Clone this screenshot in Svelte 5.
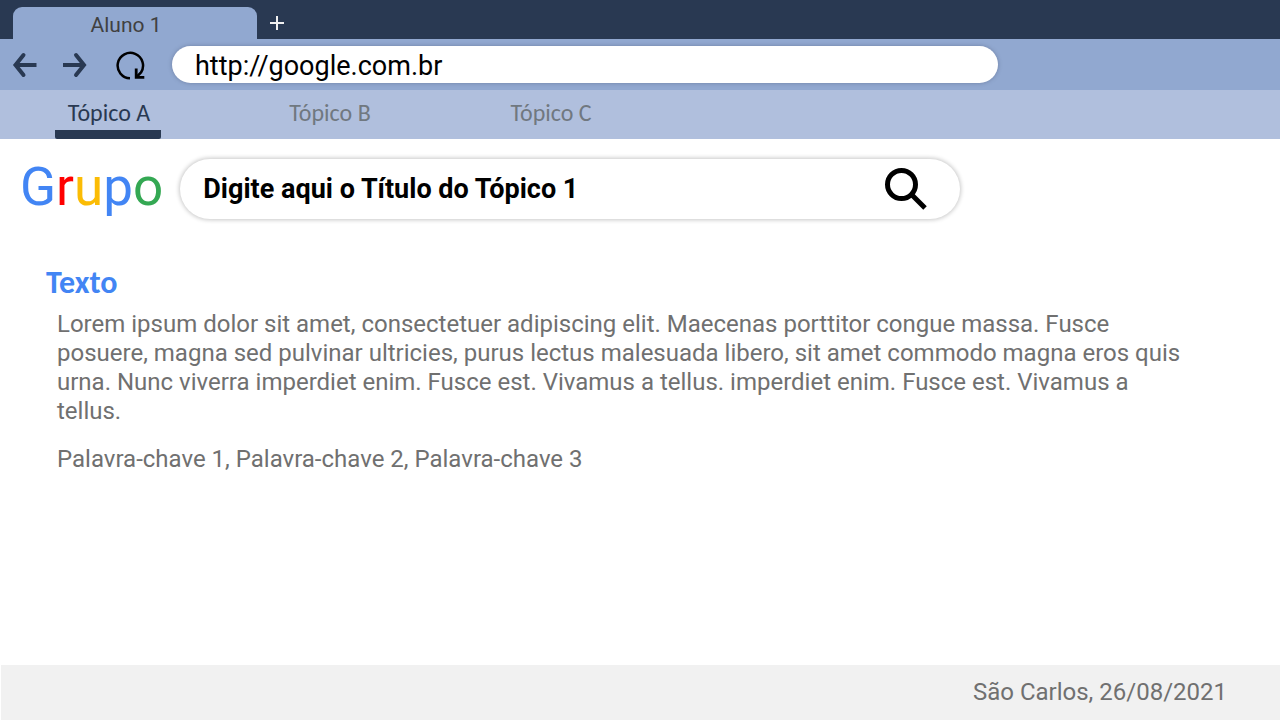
<script lang="ts">
  // Browser-style slide: window tab, address bar, topic navigation and content.
  const topics = ['Tópico A', 'Tópico B', 'Tópico C'];

  const logo = [
    { letter: 'G', color: 'blue' },
    { letter: 'r', color: 'red' },
    { letter: 'u', color: 'yellow' },
    { letter: 'p', color: 'blue' },
    { letter: 'o', color: 'green' }
  ];

  let active = $state(0);
  let url = $state('http://google.com.br');
  let title = $state('Digite aqui o Título do Tópico 1');
</script>

<div class="window">
  <header>
    <div class="tabs">
      <button class="tab">Aluno 1</button>
      <button class="new-tab" aria-label="Nova aba">
        <svg width="14" height="14" viewBox="0 0 14 14">
          <path d="M7 0v14M0 7h14" />
        </svg>
      </button>
    </div>

    <div class="toolbar">
      <button class="tool" aria-label="Voltar">
        <svg class="arrow" width="26" height="26" viewBox="0 0 26 26">
          <path d="M11.5 3L3.5 13l8 10" stroke-linecap="round" />
          <path d="M3 13h21.5" />
        </svg>
      </button>
      <button class="tool" aria-label="Avançar">
        <svg class="arrow" width="26" height="26" viewBox="0 0 26 26">
          <path d="M14 3l8 10l-8 10" stroke-linecap="round" />
          <path d="M22.5 13H1" />
        </svg>
      </button>
      <button class="tool reload" aria-label="Recarregar">
        <svg width="30" height="30" viewBox="0 0 30 30">
          <path d="M14 28.3A12.7 12.7 0 1 1 25 22.500L21 26.500" stroke-width="2.5" />
          <path d="M20.200 18.500V27.300H28.300" stroke-width="2.8" />
        </svg>
      </button>
      <input class="address" type="text" aria-label="Endereço" bind:value={url} />
    </div>

    <nav>
      {#each topics as topic, i}
        <a href="#topico-{i + 1}" class:active={active === i} onclick={() => (active = i)}>{topic}</a>
      {/each}
    </nav>
  </header>

  <main>
    <div class="search-row">
      <div class="logo">{#each logo as { letter, color }}<span class={color}>{letter}</span>{/each}</div>
      <div class="search">
        <input type="text" aria-label="Título" bind:value={title} />
        <button aria-label="Pesquisar">
          <svg width="44" height="44" viewBox="0 0 44 44">
            <circle cx="17.500" cy="17.500" r="14" />
            <path d="M27 27L41 41" />
          </svg>
        </button>
      </div>
    </div>

    <article>
      <h1>Texto</h1>
      <p>
        Lorem ipsum dolor sit amet, consectetuer adipiscing elit. Maecenas porttitor congue massa. Fusce
        posuere, magna sed pulvinar ultricies, purus lectus malesuada libero, sit amet commodo magna eros quis
        urna. Nunc viverra imperdiet enim. Fusce est. Vivamus a tellus. imperdiet enim. Fusce est. Vivamus a
        tellus.
      </p>
      <p>Palavra-chave 1, Palavra-chave 2, Palavra-chave 3</p>
    </article>
  </main>

  <footer>São Carlos, 26/08/2021</footer>
</div>

<style>
  .window {
    display: flex;
    flex-direction: column;
    min-height: 100vh;
    background: #fff;
    color: #707070;
    font-family: Roboto, sans-serif;
    font-size: 24px;
  }
  button,
  input {
    padding: 0;
    border: 0;
    background: none;
    font: inherit;
    color: inherit;
  }
  button {
    cursor: pointer;
  }
  svg {
    display: block;
    fill: none;
    stroke: currentColor;
  }

  .tabs {
    display: flex;
    align-items: flex-end;
    height: 39px;
    padding-left: 13px;
    background: #293952;
  }
  .tab {
    width: 244px;
    height: 32px;
    padding: 4px 18px 0 0;
    border-radius: 9px 9px 0 0;
    background: #91a8d0;
    color: #404040;
    font-size: 21px;
    line-height: 28px;
  }
  .new-tab {
    height: 32px;
    padding: 0 13px;
    color: #f0f0f0;
    stroke-width: 2;
  }

  .toolbar {
    display: flex;
    align-items: center;
    height: 51px;
    padding: 0 12px;
    background: #91a8d0;
  }
  .tool {
    margin-right: 24px;
    color: #293952;
  }
  .arrow {
    stroke-width: 4;
  }
  .reload {
    margin: 0 26px 0 4px;
    color: #000;
  }
  .address {
    flex: 1;
    box-sizing: border-box;
    min-width: 0;
    max-width: 826px;
    height: 37px;
    padding: 2px 23px 0;
    border-radius: 19px;
    background: #fff;
    box-shadow: 0 0 4px rgb(60 70 100 / 40%);
    color: #000;
    font-size: 27px;
  }

  nav {
    display: flex;
    gap: 115px;
    height: 49px;
    padding-left: 55px;
    background: #b0bfdd;
    font-family: Carlito, Calibri, "Noto Sans", sans-serif;
    font-size: 24px;
  }
  nav a {
    box-sizing: border-box;
    width: 106px;
    padding-left: 2px;
    border-bottom: 9px solid transparent;
    border-radius: 2px;
    color: #707880;
    line-height: 46px;
    text-align: center;
    text-decoration: none;
  }
  nav a.active {
    border-bottom-color: #293952;
    color: #293952;
  }

  main {
    flex: 1;
  }
  .search-row {
    display: flex;
    align-items: center;
    gap: 17px;
    padding: 20px 20px 0;
  }
  .logo {
    font-size: 53px;
    line-height: 56px;
    padding-bottom: 4px;
  }
  .blue {
    color: #4285f4;
  }
  .red {
    color: #f00;
  }
  .yellow {
    color: #fbbc05;
  }
  .green {
    color: #34a853;
  }
  .search {
    display: flex;
    flex: 1;
    align-items: center;
    box-sizing: border-box;
    max-width: 780px;
    height: 60px;
    padding: 0 32px 0 23px;
    border-radius: 30px;
    box-shadow: 0 0 4px 1px rgb(0 0 0 / 22%);
    color: #000;
  }
  .search input {
    flex: 1;
    min-width: 0;
    font-size: 27px;
    font-weight: 700;
  }
  .search svg {
    stroke-width: 5;
  }

  article {
    padding: 46px 90px 0 46px;
  }
  h1 {
    margin: 0;
    color: #4285f4;
    font-family: Carlito, Calibri, "Noto Sans", sans-serif;
    font-size: 32px;
    line-height: 36px;
  }
  p {
    margin: 9px 0 19px 11px;
    line-height: 29px;
  }

  footer {
    margin-left: 1px;
    padding: 0 53px 0 20px;
    background: #f1f1f1;
    line-height: 55px;
    text-align: right;
  }
</style>
